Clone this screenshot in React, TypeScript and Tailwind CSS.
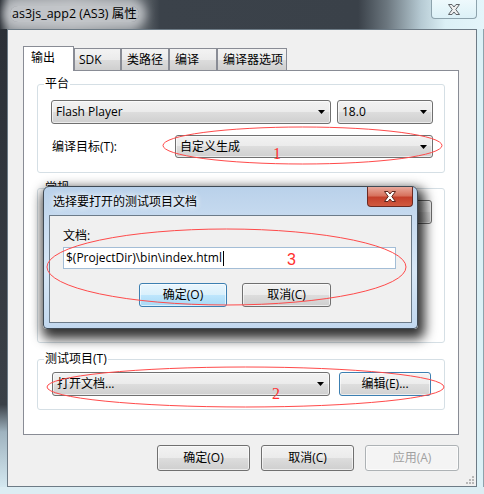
import React from "react";

const Arrow = () => (
  <svg width="7" height="4" viewBox="0 0 7 4" className="shrink-0">
    <path d="M0 0H7L3.5 4Z" fill="#000" />
  </svg>
);

const CloseGlyph = ({ fill, stroke }: { fill: string; stroke: string }) => (
  <svg width="14" height="11" viewBox="0 0 14 11">
    <path
      d="M1.5 0.5H5L7 3L9 0.5H12.5L8.8 5.5L12.5 10.5H9L7 8L5 10.5H1.5L5.2 5.5Z"
      fill={fill}
      stroke={stroke}
      strokeWidth="1"
      strokeLinejoin="round"
    />
  </svg>
);

const ComboBox = ({ text, className }: { text: string; className: string }) => (
  <div
    className={`flex items-center justify-between rounded-[3px] border border-[#707070] bg-[linear-gradient(#f2f2f2,#ebebeb_50%,#dddddd_50%,#cfcfcf)] pl-[4px] pr-[5px] shadow-[inset_0_0_0_1px_rgba(255,255,255,0.6)] ${className}`}
  >
    <span className="leading-[16px]">{text}</span>
    <Arrow />
  </div>
);

const Button = ({
  children,
  className,
  kind = "normal",
}: {
  children: React.ReactNode;
  className: string;
  kind?: "normal" | "default" | "blue" | "disabled";
}) => {
  const look = {
    normal:
      "border-[#707070] bg-[linear-gradient(#f2f2f2,#ebebeb_50%,#dddddd_50%,#cfcfcf)] text-black",
    default:
      "border-[#3c7fb1] bg-[linear-gradient(#f4f4f4,#ececec_50%,#dedede_50%,#d2d2d2)] text-black shadow-[inset_0_0_0_1px_#9fe0fb]",
    blue: "border-[#3c7fb1] bg-[linear-gradient(#eaf6fd,#d9f0fc_50%,#bee6fd_50%,#a7d9f5)] text-black shadow-[inset_0_0_0_1px_#cfeefc]",
    disabled: "border-[#adb2b5] bg-[#f4f4f4] text-[#a0a0a0]",
  }[kind];
  return (
    <div
      className={`flex items-center justify-center rounded-[3px] border leading-[16px] shadow-[inset_0_0_0_1px_rgba(255,255,255,0.6)] ${look} ${className}`}
    >
      {children}
    </div>
  );
};

const Group = ({
  label,
  className,
  children,
}: {
  label: string;
  className: string;
  children?: React.ReactNode;
}) => (
  <div className={`rounded-[3px] border border-[#d5dfe5] ${className}`}>
    <div className="-mt-[9px] ml-[6px] w-fit bg-white px-[1px] leading-[16px]">{label}</div>
    {children}
  </div>
);

const tabs = [
  { label: "SDK", cls: "w-[47px] pl-[4px]" },
  { label: "类路径", cls: "w-[48px] pl-[5px]" },
  { label: "编译", cls: "w-[48px] pl-[5px]" },
  { label: "编译器选项", cls: "w-[70px] pl-[5px]" },
];

const App = () => {
  return (
    <div className="relative h-[494px] w-[484px] overflow-hidden bg-[#dcedf3] font-['Open_Sans','Noto_Sans_CJK_SC',sans-serif] text-[12px] text-black">
      {/* title bar */}
      <div className="flex h-[29px] items-start justify-between bg-[linear-gradient(to_right,#30353b_0%,#858a8f_2%,#9a9ea2_15%,#7a8085_27%,#3b424a_33%,#3a4149_74%,#6c777f_80%,#b6cad3_87%,#dcf0f6_92%,#e4f5fa_100%)]">
        <div className="ml-[10px] mt-[6px] rounded-[10px] bg-[rgba(205,208,211,0.8)] px-[2px] text-[12.5px] leading-[16px] text-black shadow-[0_0_10px_7px_rgba(205,208,211,0.8)]">
          as3js_app2 (AS3) 属性
        </div>
        <div className="mr-[7px] flex h-[19px] w-[46px] items-center justify-center rounded-b-[4px] border border-t-0 border-[#8da3ad] bg-[linear-gradient(#eef9fc,#dcf1f7)]">
          <CloseGlyph fill="#eeeeee" stroke="#5f6468" />
        </div>
      </div>

      <div className="flex h-[458px]">
        <div className="w-[7px] bg-[linear-gradient(#2b3037_0%,#3a4047_82%,#9fb3bf_88%,#d4e8f0_100%)]" />
        {/* client */}
        <div className="relative flex w-[470px] flex-col border border-[#6d7b86] bg-[#f0f0f0] pl-[15px] pt-[16px]">
          <div className="flex h-[24px] items-start">
            <div className="relative z-10 h-[25px] w-[51px] border border-b-0 border-[#898c95] bg-white pl-[7px] pt-[3px] leading-[16px]">
              输出
            </div>
            {tabs.map((t) => (
              <div
                key={t.label}
                className={`mt-[2px] h-[22px] border border-b-0 border-[#898c95] bg-[linear-gradient(#f3f3f3,#ebebeb_50%,#dddddd_50%,#cfcfcf)] pt-[3px] leading-[16px] ${t.cls}`}
              >
                {t.label}
              </div>
            ))}
          </div>
          <div className="h-[365px] w-[436px] border border-[#898c95] bg-white pl-[13px] pt-[13px]">
            <Group label="平台" className="h-[89px] w-[408px]">
              <div className="mt-[8px] flex gap-[6px] pl-[13px]">
                <ComboBox text="Flash Player" className="h-[24px] w-[280px]" />
                <ComboBox text="18.0" className="h-[24px] w-[96px]" />
              </div>
              <div className="mt-[11px] flex items-center pl-[14px]">
                <span className="w-[123px] leading-[16px]">编译目标(T):</span>
                <ComboBox text="自定义生成" className="h-[23px] w-[258px]" />
              </div>
            </Group>
            <Group label="常规" className="mt-[15px] h-[155px] w-[408px]">
              <div className="mt-[4px] flex gap-[9px] pl-[14px]">
                <div className="h-[24px] w-[278px] border border-[#abadb3] bg-white" />
                <Button className="h-[24px] w-[93px]">浏览...</Button>
              </div>
            </Group>
            <Group label="测试项目(T)" className="mt-[16px] h-[51px] w-[408px]">
              <div className="mt-[5px] flex gap-[9px] pl-[14px]">
                <ComboBox text="打开文档..." className="h-[24px] w-[278px]" />
                <Button kind="default" className="h-[24px] w-[92px]">
                  编辑(E)...
                </Button>
              </div>
            </Group>
          </div>
          <div className="mt-[10px] flex w-[436px] justify-end gap-[11px]">
            <Button className="h-[26px] w-[93px]">确定(O)</Button>
            <Button className="h-[26px] w-[93px]">取消(C)</Button>
            <Button kind="disabled" className="h-[26px] w-[94px]">
              应用(A)
            </Button>
          </div>
          <svg width="8" height="8" viewBox="0 0 8 8" className="absolute bottom-[2px] right-[2px]">
            <g fill="#b8b8b8">
              <rect x="6" y="0" width="2" height="2" />
              <rect x="3" y="3" width="2" height="2" />
              <rect x="6" y="3" width="2" height="2" />
              <rect x="0" y="6" width="2" height="2" />
              <rect x="3" y="6" width="2" height="2" />
              <rect x="6" y="6" width="2" height="2" />
            </g>
          </svg>
        </div>
        <div className="w-[7px] border-r border-[#8da3ad] bg-[#dcf1f7]" />
      </div>

      {/* modal dialog */}
      <div className="absolute left-[43px] top-[186px] flex h-[143px] w-[375px] flex-col rounded-t-[6px] rounded-b-[4px] border border-[#3f4a55] bg-[linear-gradient(#b9d1ea_0%,#c9dcf0_25%,#d7e7f6_60%,#c2d8ef_100%)] px-[5px] pb-[5px] shadow-[3px_6px_12px_4px_rgba(0,0,0,0.8)]">
        <div className="flex h-[28px] items-start justify-between">
          <div className="ml-[4px] mt-[7px] leading-[16px] [text-shadow:0_0_6px_#fff,0_0_6px_#fff]">
            选择要打开的测试项目文档
          </div>
          <div className="-mr-[1px] flex h-[20px] w-[46px] items-center justify-center rounded-b-[4px] border border-t-0 border-[#6b2a22] bg-[linear-gradient(#e9a99c,#d7735f_45%,#c4402c_55%,#d05a40)]">
            <CloseGlyph fill="#ffffff" stroke="#5a241c" />
          </div>
        </div>
        <div className="flex-1 border border-[#6c7b89] bg-[#f0f0f0] pl-[13px] pt-[12px]">
          <div className="leading-[16px]">文档:</div>
          <div className="mt-[3px] flex h-[22px] w-[333px] items-center border border-[#a3bdd6] bg-white pl-[2px]">
            <span className="leading-[16px]">{"$(ProjectDir)\\bin\\index.html"}</span>
            <span className="ml-[1px] inline-block h-[15px] w-px bg-black" />
          </div>
          <div className="mt-[14px] flex gap-[15px] pl-[76px]">
            <Button kind="blue" className="h-[24px] w-[88px]">
              确定(O)
            </Button>
            <Button className="h-[24px] w-[89px]">取消(C)</Button>
          </div>
        </div>
      </div>

      {/* red annotations */}
      <svg width="484" height="494" className="pointer-events-none absolute left-0 top-0 z-50">
        <g fill="none" stroke="#ff4a4a" strokeWidth="1">
          <ellipse cx="302.5" cy="145.5" rx="139.5" ry="18.5" />
          <ellipse cx="245.5" cy="387" rx="198.5" ry="20" />
          <ellipse cx="226.5" cy="267" rx="179.5" ry="38" />
        </g>
        <g fill="#ff3030" fontSize="16">
          <text x="273" y="159" fontFamily="Liberation Serif, serif">1</text>
          <text x="272" y="399" fontFamily="Liberation Serif, serif">2</text>
          <text x="287" y="265" fontFamily="Liberation Sans, sans-serif">3</text>
        </g>
      </svg>
    </div>
  );
};

export default App;
